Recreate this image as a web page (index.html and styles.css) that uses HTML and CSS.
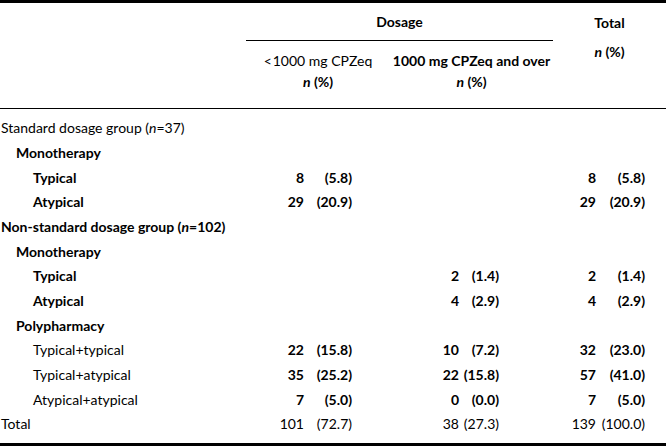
FILE: index.html
```html
<!DOCTYPE html>
<html>
<head>
<meta charset="utf-8">
<link rel="stylesheet" href="styles.css">
</head>
<body>
<div class="tbl">
  <div class="head">
    <div class="h-dosage">Dosage</div>
    <div class="h-sub h-sub1"><div>&lt;&#8202;1000 mg CPZeq</div><div class="b"><i>n</i> (%)</div></div>
    <div class="h-sub h-sub2"><div class="b">1000 mg CPZeq and over</div><div class="b"><i>n</i> (%)</div></div>
    <div class="h-total"><div class="h-total-t">Total</div><div class="b"><i>n</i> (%)</div></div>
  </div>
  <div class="body">
    <div class="row"><div class="lab l0">Standard dosage group (<i>n</i>=37)</div></div>
    <div class="row"><div class="lab l1 b">Monotherapy</div></div>
    <div class="row b"><div class="lab l2">Typical</div><div class="n1">8</div><div class="p1">(5.8)</div><div class="n3">8</div><div class="p3">(5.8)</div></div>
    <div class="row b"><div class="lab l2">Atypical</div><div class="n1">29</div><div class="p1">(20.9)</div><div class="n3">29</div><div class="p3">(20.9)</div></div>
    <div class="row"><div class="lab l0 b">Non-standard dosage group (<i>n</i>=102)</div></div>
    <div class="row"><div class="lab l1 b">Monotherapy</div></div>
    <div class="row b"><div class="lab l2">Typical</div><div class="n2">2</div><div class="p2">(1.4)</div><div class="n3">2</div><div class="p3">(1.4)</div></div>
    <div class="row b"><div class="lab l2">Atypical</div><div class="n2">4</div><div class="p2">(2.9)</div><div class="n3">4</div><div class="p3">(2.9)</div></div>
    <div class="row"><div class="lab l1 b">Polypharmacy</div></div>
    <div class="row b"><div class="lab l2 r">Typical+typical</div><div class="n1">22</div><div class="p1">(15.8)</div><div class="n2">10</div><div class="p2">(7.2)</div><div class="n3">32</div><div class="p3">(23.0)</div></div>
    <div class="row b"><div class="lab l2 r">Typical+atypical</div><div class="n1">35</div><div class="p1">(25.2)</div><div class="n2">22</div><div class="p2">(15.8)</div><div class="n3">57</div><div class="p3">(41.0)</div></div>
    <div class="row b"><div class="lab l2 r">Atypical+atypical</div><div class="n1">7</div><div class="p1">(5.0)</div><div class="n2">0</div><div class="p2">(0.0)</div><div class="n3">7</div><div class="p3">(5.0)</div></div>
    <div class="row"><div class="lab l0">Total</div><div class="n1">101</div><div class="p1">(72.7)</div><div class="n2">38</div><div class="p2">(27.3)</div><div class="n3">139</div><div class="p3">(100.0)</div></div>
  </div>
</div>
</body>
</html>
```
FILE: styles.css
```css
html, body {
  margin: 0;
  padding: 0;
  background: #fff;
}
body {
  font-family: Lato, "Open Sans", sans-serif;
  font-size: 14px;
  color: #000;
}
.tbl {
  width: 666px;
  height: 446px;
  box-sizing: border-box;
  border-top: 3px solid #000;
  border-bottom: 3px solid #000;
}
.b { font-weight: 700; }
.r { font-weight: 400; }
i { font-style: italic; }
.head {
  display: grid;
  grid-template-columns: 246px 144px 163px 1fr;
  grid-template-rows: 38px 67px;
  border-bottom: 1px solid #000;
}
.h-dosage {
  grid-column: 2 / 4;
  grid-row: 1;
  box-sizing: border-box;
  border-bottom: 1px solid #000;
  display: flex;
  align-items: center;
  justify-content: center;
  font-weight: 700;
}
.h-sub {
  grid-row: 2;
  padding-top: 8.5px;
  line-height: 21px;
  text-align: center;
  white-space: nowrap;
}
.h-sub1 { grid-column: 2; }
.h-sub2 { grid-column: 3; }
.h-total {
  grid-column: 4;
  grid-row: 1 / 3;
  text-align: center;
  line-height: 21px;
}
.h-total-t {
  height: 38px;
  display: flex;
  align-items: center;
  justify-content: center;
  font-weight: 700;
}
.body {
  padding-top: 6.67px;
}
.row {
  display: grid;
  grid-template-columns: 250px 54px 48px 32px 75px 40px 56px 41px 49px 1fr;
  height: 24.67px;
  align-items: center;
  white-space: nowrap;
}
.lab { grid-column: 1; }
.l0 { padding-left: 1px; }
.l1 { padding-left: 16px; }
.l2 { padding-left: 33px; }
.n1, .n2, .n3, .p1, .p2, .p3 { text-align: right; }
.n1 { grid-column: 2; }
.p1 { grid-column: 3; }
.n2 { grid-column: 5; }
.p2 { grid-column: 6; }
.n3 { grid-column: 8; }
.p3 { grid-column: 9; }
```
